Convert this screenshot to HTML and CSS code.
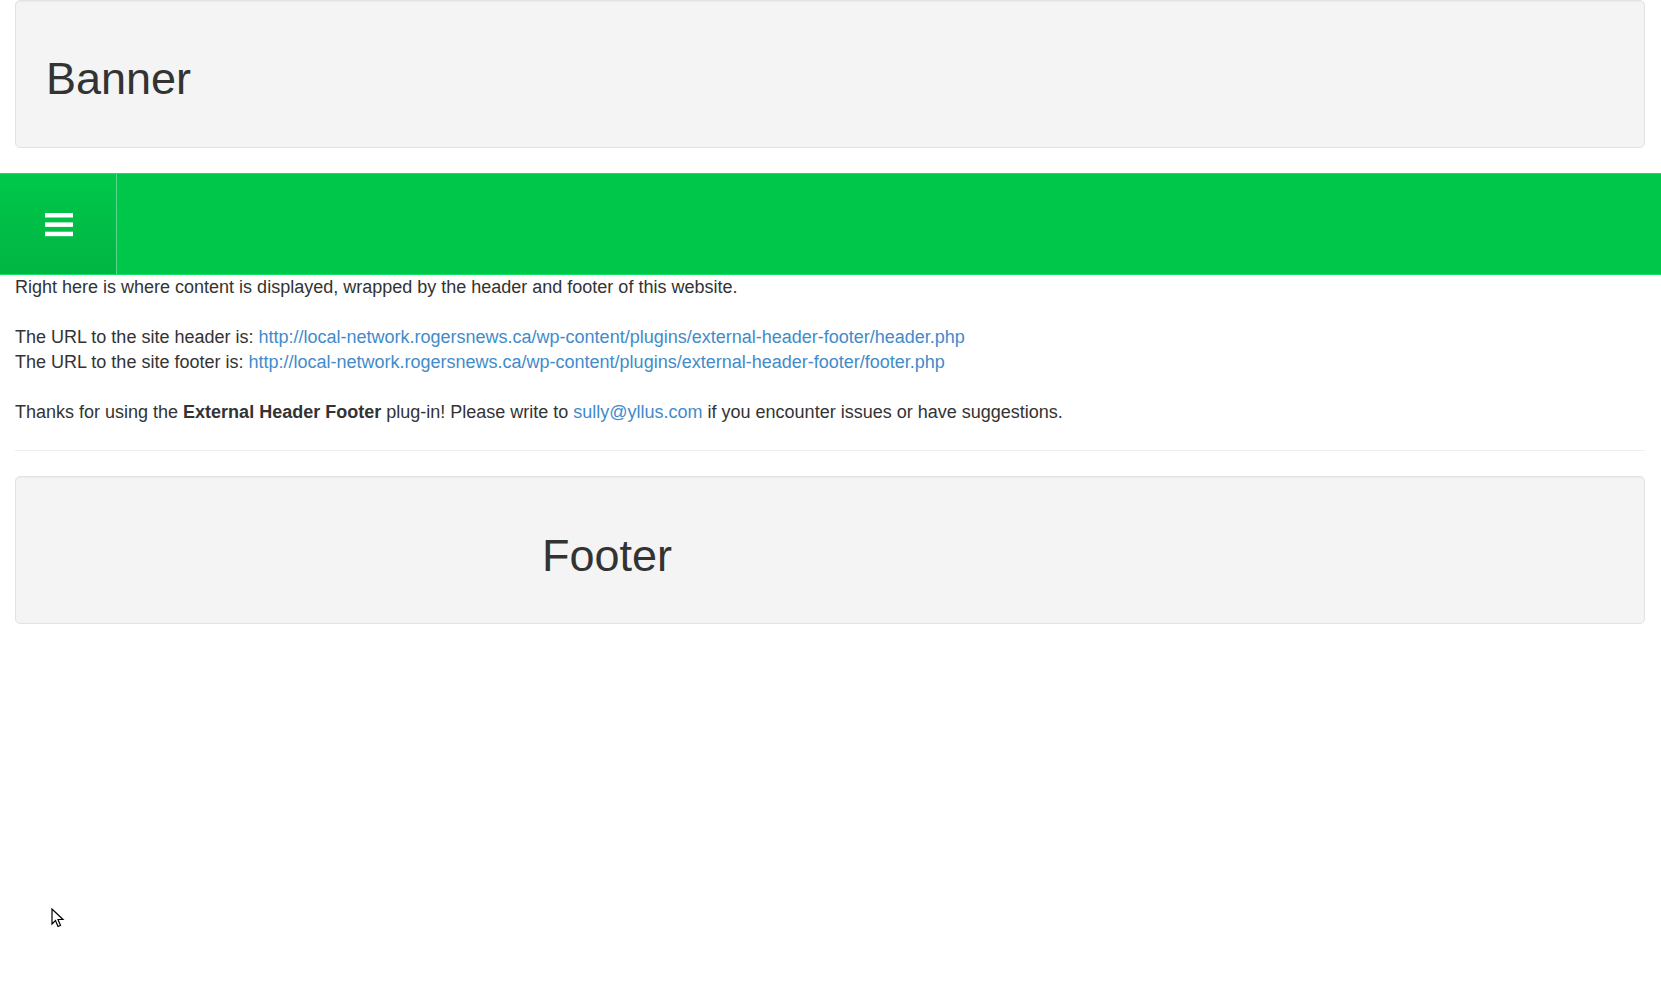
FILE: index.html
```html
<!DOCTYPE html>
<html lang="en">
<head>
<meta charset="utf-8">
<title>External Header Footer</title>
<link rel="stylesheet" href="styles.css">
</head>
<body>
<div class="container">
  <div class="well banner"><h1 class="well-title">Banner</h1></div>
</div>
<nav class="navbar">
  <button class="toggle" aria-label="Menu">
    <svg width="28" height="24" viewBox="0 0 28 24">
      <rect x="0" y="0" width="28" height="4.5" fill="#fff"/>
      <rect x="0" y="9.4" width="28" height="4.5" fill="#fff"/>
      <rect x="0" y="18.7" width="28" height="4.5" fill="#fff"/>
    </svg>
  </button>
</nav>
<div class="container content">
  <p class="text">Right here is where content is displayed, wrapped by the header and footer of this website.<br><br>The URL to the site header is: <a href="#">http://local-network.rogersnews.ca/wp-content/plugins/external-header-footer/header.php</a><br>The URL to the site footer is: <a href="#">http://local-network.rogersnews.ca/wp-content/plugins/external-header-footer/footer.php</a><br><br>Thanks for using the <strong>External Header Footer</strong> plug-in! Please write to <a href="#">sully@yllus.com</a> if you encounter issues or have suggestions.</p>
  <hr class="rule">
  <div class="well footer"><h1 class="well-title footer-title">Footer</h1></div>
</div>
<svg class="cursor" width="14" height="21" viewBox="0 0 14 21">
  <path d="M1 1 L1 16 L4.5 12.5 L7 18.5 L9.5 17.5 L7 11.5 L12 11.5 Z" fill="#fff" stroke="#000" stroke-width="1.2" stroke-linejoin="miter"/>
</svg>
</body>
</html>
```

FILE: styles.css
```css
html, body {
  margin: 0;
  padding: 0;
  background: #fff;
}
body {
  font-family: "Liberation Sans", Arial, sans-serif;
  font-size: 18px;
  line-height: 25px;
  color: #333;
  position: relative;
  min-height: 996px;
}
.container {
  padding: 0 16px 0 15px;
}
.well {
  box-sizing: border-box;
  height: 148px;
  background: #f4f4f4;
  border: 1px solid #e3e3e3;
  border-radius: 5px;
  box-shadow: inset 0 1px 1px rgba(0,0,0,.04);
  padding: 53px 27px 45px 30px;
}
.banner {
  margin-bottom: 25px;
}
.well-title {
  margin: 0;
  font-size: 45px;
  line-height: 50px;
  font-weight: 500;
  color: #333;
}
.footer-title {
  padding-left: 496px;
  position: relative;
  top: 1px;
}
.navbar {
  box-sizing: border-box;
  height: 102px;
  background: #00c74a;
  border-top: 1px solid #14e463;
  border-bottom: 1px solid #14e463;
  display: flex;
}
.toggle {
  box-sizing: border-box;
  width: 117px;
  height: 100px;
  margin: 0;
  padding: 0;
  border: 0;
  border-right: 1px solid #55d98a;
  background: linear-gradient(#00c84b, #00b543);
  display: flex;
  align-items: center;
  justify-content: center;
  cursor: pointer;
}
.toggle svg {
  display: block;
  margin-left: 1px;
  margin-top: 1px;
}
.text {
  margin: 0;
}
.text a {
  color: #428bca;
  text-decoration: none;
}
.text strong {
  font-weight: 700;
}
.rule {
  margin: 25px 0 25px 0;
  border: 0;
  border-top: 1px solid #eee;
  height: 0;
}
.cursor {
  position: absolute;
  left: 51px;
  top: 908px;
}
```
